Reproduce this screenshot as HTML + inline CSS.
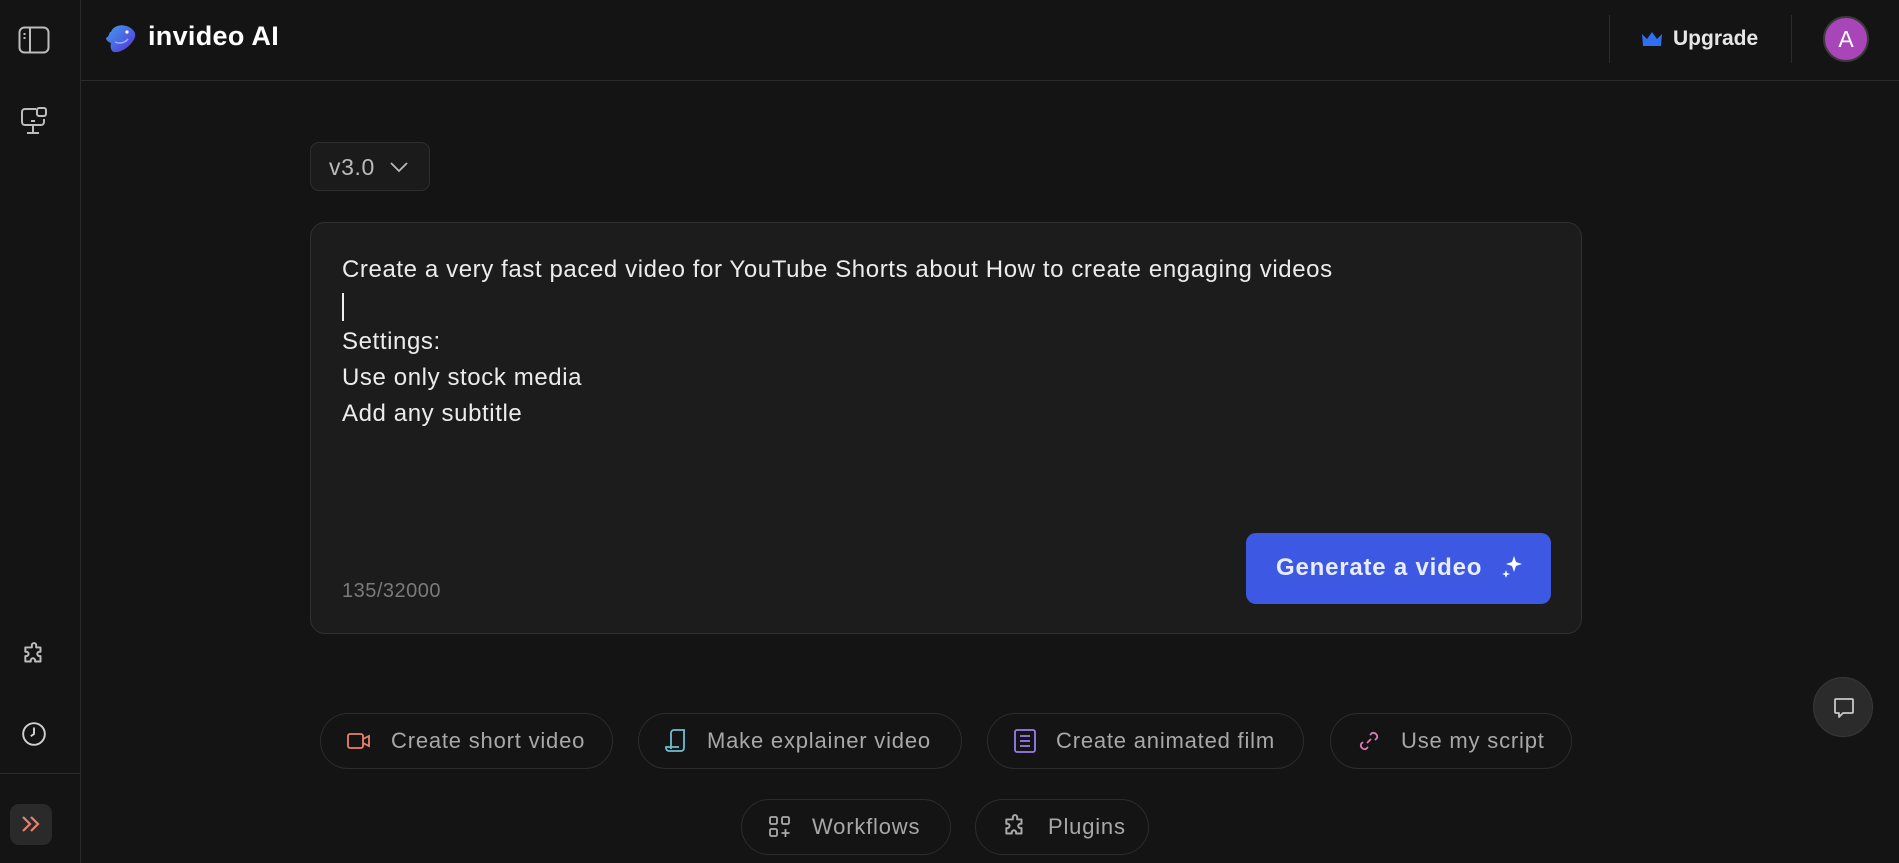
<!DOCTYPE html>
<html><head><meta charset="utf-8"><style>
*{box-sizing:border-box;margin:0;padding:0}
body{width:1899px;height:863px;background:#141414;font-family:"Liberation Sans",sans-serif;color:#e8e8e8;position:relative;overflow:hidden}
.sb{position:absolute;left:0;top:0;width:81px;height:863px;border-right:1px solid #2a2a2a}
.hd{position:absolute;left:81px;top:0;right:0;height:81px;border-bottom:1px solid #2a2a2a}
.abs{position:absolute}
.chip{position:absolute;height:56px;border:1px solid #2c2c2c;border-radius:28px;display:flex;align-items:center;font-size:22px;letter-spacing:0.8px;color:#a8a8a8;gap:20px;padding-left:26px}
.chip svg{flex:none}
</style></head><body>
<div class="sb">
 <svg class="abs" style="left:18px;top:26px" width="32" height="28" viewBox="0 0 32 28" fill="none" stroke="#bdbdbd" stroke-width="2"><rect x="1.5" y="1.5" width="29" height="25" rx="5"/><line x1="12" y1="2" x2="12" y2="26"/><line x1="5.5" y1="8" x2="7.5" y2="8"/><line x1="5.5" y1="12" x2="7.5" y2="12"/></svg>
 <svg class="abs" style="left:20px;top:106px" width="28" height="30" viewBox="0 0 28 30" fill="none" stroke="#bdbdbd" stroke-width="2"><path d="M16 3H5a3 3 0 0 0-3 3v10a3 3 0 0 0 3 3h16a3 3 0 0 0 3-3v-3"/><rect x="17" y="2" width="9" height="8" rx="2"/><line x1="13" y1="19" x2="13" y2="27"/><line x1="7" y1="27" x2="19" y2="27"/><line x1="11" y1="15" x2="15" y2="15"/></svg>
 <svg class="abs" style="left:21px;top:642px" width="26" height="26" viewBox="0 0 24 24" fill="none" stroke="#bdbdbd" stroke-width="1.8" stroke-linejoin="round"><path d="M10 3a2 2 0 0 1 4 0v2h4v4h-1a2 2 0 0 0 0 4h1v5h-5v-1a2 2 0 0 0-4 0v1H4v-5h1a2 2 0 0 0 0-4H4V5h6z"/></svg>
 <svg class="abs" style="left:21px;top:721px" width="26" height="26" viewBox="0 0 24 24" fill="none" stroke="#d0d0d0" stroke-width="1.8"><circle cx="12" cy="12" r="10"/><path d="M12 6v6l-3 2"/></svg>
 <div class="abs" style="left:0;top:773px;width:81px;border-top:1px solid #2a2a2a"></div>
 <div class="abs" style="left:10px;top:804px;width:42px;height:41px;background:#2a2a2a;border-radius:9px"></div>
 <svg class="abs" style="left:20px;top:814px" width="22" height="20" viewBox="0 0 22 20" fill="none" stroke="#e8826c" stroke-width="2.2"><path d="M3 3l7 7-7 7M11 3l7 7-7 7"/></svg>
</div>
<div class="hd">
 <svg class="abs" style="left:24px;top:22px" width="32" height="32" viewBox="0 0 32 32"><defs><linearGradient id="g" x1="0" y1="0" x2="1" y2="1"><stop offset="0" stop-color="#3fa0ee"/><stop offset="1" stop-color="#5a2fd6"/></linearGradient></defs><path d="M6 10C8 3 20 0 28 8c3 3 3 7 0 11-4 6-12 12-19 11-3-1-4-5-3-9-3-1-5-3-5-5 2-1 3-3 4-6z" fill="url(#g)"/><circle cx="22" cy="10" r="1.6" fill="#fff"/><path d="M10 20c4 2 10 1 13-3" stroke="#8fb4ff" stroke-width="1.5" fill="none"/></svg>
 <div class="abs" style="left:67px;top:21px;font-size:27px;letter-spacing:0.3px;font-weight:bold;color:#fff">invideo AI</div>
 <div class="abs" style="left:1528px;top:15px;height:48px;border-left:1px solid #2c2c2c"></div>
 <svg class="abs" style="left:1561px;top:32px" width="20" height="14" viewBox="0 0 20 14"><path d="M0 2l5 5 5-7 5 7 5-5-1 12H1z" fill="#2f6ff0"/></svg>
 <div class="abs" style="left:1592px;top:27px;font-size:21px;font-weight:bold;color:#e6e6e6">Upgrade</div>
 <div class="abs" style="left:1710px;top:15px;height:48px;border-left:1px solid #2c2c2c"></div>
 <div class="abs" style="left:1742px;top:16px;width:46px;height:46px;border-radius:50%;background:#a845b8;border:2px solid #3a3a3a;color:#fff;font-size:23px;display:flex;align-items:center;justify-content:center">A</div>
</div>
<div class="abs" style="left:310px;top:142px;width:120px;height:49px;border:1px solid #2e2e2e;border-radius:9px;background:#1b1b1b;font-size:23px;letter-spacing:0.6px;color:#bbb;padding:11px 0 0 18px">v3.0<svg style="position:absolute;left:78px;top:18px" width="20" height="12" viewBox="0 0 20 12" fill="none" stroke="#bbb" stroke-width="1.8"><path d="M2 2l8 8 8-8"/></svg></div>
<div class="abs" style="left:310px;top:222px;width:1272px;height:412px;border:1px solid #303030;border-radius:15px;background:#1c1c1c">
 <div class="abs" style="left:31px;top:29px;font-size:24px;letter-spacing:0.6px;line-height:36px;color:#ececec">Create a very fast paced video for YouTube Shorts about How to create engaging videos<br><span style="display:inline-block;width:1.5px;height:28px;background:#eee;vertical-align:middle"></span><br>Settings:<br>Use only stock media<br>Add any subtitle</div>
 <div class="abs" style="left:31px;top:357px;font-size:20px;letter-spacing:0.5px;color:#7a7a7a">135/32000</div>
 <div class="abs" style="left:935px;top:310px;width:305px;height:71px;border-radius:10px;background:#3d59e4;color:#e8ecff;font-size:24px;letter-spacing:0.8px;font-weight:bold;padding:21px 0 0 30px">Generate a video<svg style="position:absolute;left:255px;top:22px" width="22" height="26" viewBox="0 0 22 26" fill="#fff"><path d="M13 1l2 6 6 2-6 2-2 6-2-6-6-2 6-2z"/><path d="M5 15l1 3 3 1-3 1-1 3-1-3-3-1 3-1z"/></svg></div>
</div>
<div class="chip" style="left:320px;top:713px;width:293px"><svg width="24" height="20" viewBox="0 0 24 20" fill="none" stroke="#e8826c" stroke-width="1.8"><rect x="1" y="3" width="15" height="14" rx="2"/><path d="M16 8l6-3v10l-6-3"/></svg>Create short video</div>
<div class="chip" style="left:638px;top:713px;width:324px"><svg width="22" height="24" viewBox="0 0 22 24" fill="none" stroke="#6cc0d4" stroke-width="1.8"><path d="M6 20V4a3 3 0 0 1 3-3h10v18a3 3 0 0 1-3 3H4a3 3 0 0 1-3-3v-1h13"/></svg>Make explainer video</div>
<div class="chip" style="left:987px;top:713px;width:317px"><svg width="22" height="24" viewBox="0 0 22 24" fill="none" stroke="#9a7ef0" stroke-width="1.8"><rect x="1" y="1" width="20" height="22" rx="2"/><path d="M6 7h10M6 12h10M6 17h10"/></svg>Create animated film</div>
<div class="chip" style="left:1330px;top:713px;width:242px"><svg width="24" height="24" viewBox="0 0 24 24" fill="none" stroke="#e07ab8" stroke-width="1.8"><path d="M10 14l4-4M13 6l2-2a4 4 0 0 1 5 5l-2 2M11 18l-2 2a4 4 0 0 1-5-5l2-2"/></svg>Use my script</div>
<div class="chip" style="left:741px;top:799px;width:210px"><svg width="24" height="24" viewBox="0 0 24 24" fill="none" stroke="#aaa" stroke-width="1.8"><rect x="2" y="2" width="7" height="7" rx="1.5"/><rect x="14" y="2" width="7" height="7" rx="1.5"/><rect x="2" y="14" width="7" height="7" rx="1.5"/><path d="M17.5 14v8M13.5 18h8"/></svg>Workflows</div>
<div class="chip" style="left:975px;top:799px;width:174px"><svg width="26" height="26" viewBox="0 0 24 24" fill="none" stroke="#aaa" stroke-width="1.8" stroke-linejoin="round"><path d="M10 3a2 2 0 0 1 4 0v2h4v4h-1a2 2 0 0 0 0 4h1v5h-5v-1a2 2 0 0 0-4 0v1H4v-5h1a2 2 0 0 0 0-4H4V5h6z"/></svg>Plugins</div>
<div class="abs" style="left:1813px;top:677px;width:60px;height:60px;border-radius:50%;background:#2b2b2b;border:1px solid #383838"><svg style="position:absolute;left:18px;top:18px" width="24" height="24" viewBox="0 0 24 24" fill="none" stroke="#c8c8c8" stroke-width="1.8" stroke-linejoin="round"><path d="M4 3h16a1 1 0 0 1 1 1v12a1 1 0 0 1-1 1H11l-4 4v-4H4a1 1 0 0 1-1-1V4a1 1 0 0 1 1-1z"/></svg></div>
</body></html>
